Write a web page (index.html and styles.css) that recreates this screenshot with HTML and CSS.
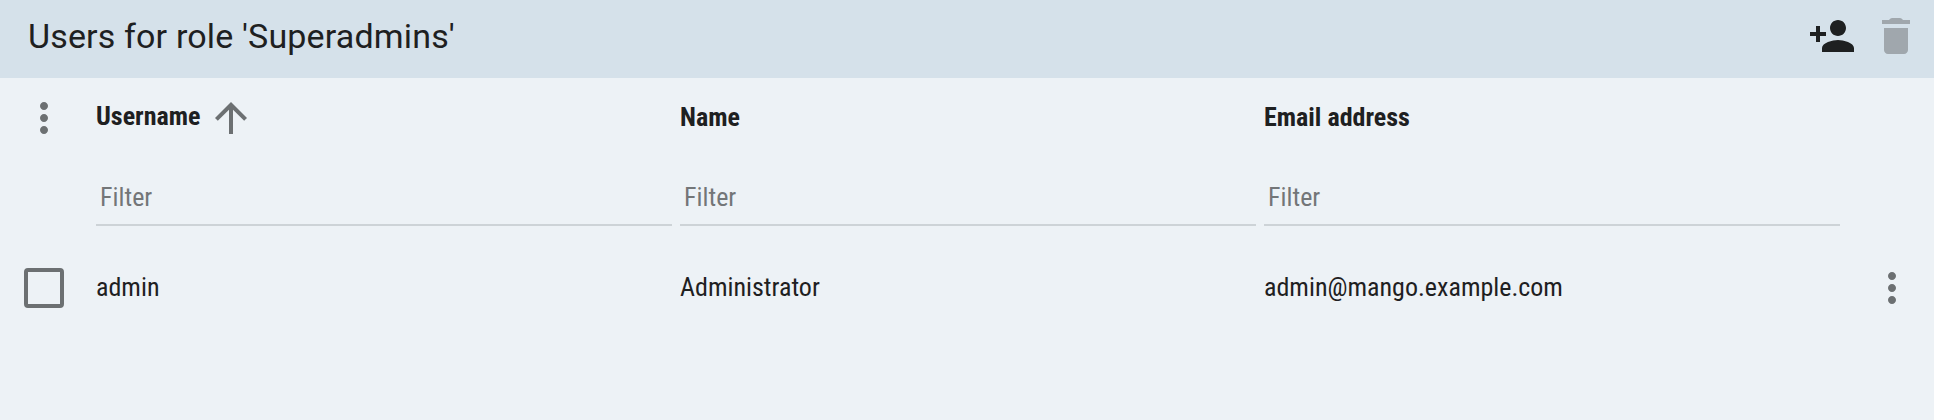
FILE: index.html
```html
<!DOCTYPE html>
<html lang="en">
<head>
<meta charset="utf-8">
<title>Users for role</title>
<link rel="stylesheet" href="styles.css">
</head>
<body>
<header class="toolbar">
  <h1 class="title">Users for role 'Superadmins'</h1>
  <button class="icon-button" aria-label="Add user"><svg class="icon" viewBox="0 0 24 24"><path d="M15 12c2.21 0 4-1.79 4-4s-1.79-4-4-4-4 1.79-4 4 1.79 4 4 4zm-9-2V7H4v3H1v2h3v3h2v-3h3v-2H6zm9 4c-2.67 0-8 1.34-8 4v2h16v-2c0-2.66-5.33-4-8-4z"/></svg></button>
  <button class="icon-button disabled" aria-label="Delete" disabled><svg class="icon" viewBox="0 0 24 24"><path d="M6 19c0 1.1.9 2 2 2h8c1.1 0 2-.9 2-2V8H6v11zM15.500 4l-.59-.59c-.26-.26-.65-.41-1-.41h-3.820c-.35 0-.74.15-1 .41L8.500 4H5v2h14V4z"/></svg></button>
</header>
<main class="table">
  <div class="row head">
    <button class="icon-button muted menu" aria-label="Columns"><svg class="icon" viewBox="0 0 24 24"><path d="M12 8c1.100 0 2-.9 2-2s-.9-2-2-2-2 .9-2 2 .9 2 2 2zm0 2c-1.100 0-2 .9-2 2s.9 2 2 2 2-.9 2-2-.9-2-2-2zm0 6c-1.100 0-2 .9-2 2s.9 2 2 2 2-.9 2-2-.9-2-2-2z"/></svg></button>
    <div class="cell sorted"><span class="label">Username</span><svg class="icon muted" viewBox="0 0 24 24"><path d="M4 12l1.410 1.410L11 7.830V20h2V7.830l5.580 5.590L20 12l-8-8-8 8z"/></svg></div>
    <div class="cell text">Name</div>
    <div class="cell text">Email address</div>
  </div>
  <div class="row filters">
    <input class="filter" placeholder="Filter" aria-label="Filter username">
    <input class="filter" placeholder="Filter" aria-label="Filter name">
    <input class="filter" placeholder="Filter" aria-label="Filter email address">
  </div>
  <div class="row data">
    <span class="checkbox" role="checkbox" aria-checked="false"></span>
    <div class="cell text">admin</div>
    <div class="cell text">Administrator</div>
    <div class="cell text">admin@mango.example.com</div>
    <button class="icon-button muted menu" aria-label="Row actions"><svg class="icon" viewBox="0 0 24 24"><path d="M12 8c1.100 0 2-.9 2-2s-.9-2-2-2-2 .9-2 2 .9 2 2 2zm0 2c-1.100 0-2 .9-2 2s.9 2 2 2 2-.9 2-2-.9-2-2-2zm0 6c-1.100 0-2 .9-2 2s.9 2 2 2 2-.9 2-2-.9-2-2-2z"/></svg></button>
  </div>
</main>
</body>
</html>
```

FILE: styles.css
```css
* { box-sizing: border-box; }
body {
  margin: 0;
  min-height: 420px;
  background: #edf2f6;
  color: #1e2021;
  font-family: "Roboto Condensed", Roboto, sans-serif;
  font-stretch: 75%;
  font-size: 26px;
}
.toolbar {
  display: flex;
  align-items: center;
  gap: 16px;
  height: 78px;
  padding: 0 14px 6px 28px;
  background: #d5e1ea;
}
.title {
  flex: 1;
  margin: 0;
  font: 400 34px/40px Roboto, sans-serif;
  font-stretch: 100%;
  letter-spacing: 0.16px;
}
.icon-button {
  width: 48px;
  height: 48px;
  padding: 0;
  border: 0;
  background: none;
  color: inherit;
}
.icon { display: block; width: 48px; height: 48px; fill: currentColor; }
.disabled { color: #a0a7ad; }
.muted { color: #6c7072; }
.row {
  display: grid;
  grid-template-columns: 48px repeat(3, 576px) 48px;
  column-gap: 8px;
  align-items: center;
  padding-left: 40px;
}
.text { padding-bottom: 2px; }
.head { height: 80px; font-weight: 700; }
.head .menu { margin-left: -20px; }
.sorted { display: flex; align-items: center; }
.sorted .label { width: 110.5px; margin-top: -4px; }
.filters { height: 68px; align-items: end; }
.filter {
  height: 58px;
  padding: 2px 4px 0;
  border: 0;
  border-bottom: 2px solid #cdd3d7;
  border-radius: 0;
  background: none;
  font: inherit;
  outline: 0;
}
.filter:first-child { grid-column: 2; }
.filter::placeholder { color: #737678; opacity: 1; }
.data { height: 124px; }
.data .menu { margin-left: 20px; }
.checkbox {
  width: 40px;
  height: 40px;
  margin-left: -16px;
  border: 4px solid #6c7072;
  border-radius: 4px;
}
```
